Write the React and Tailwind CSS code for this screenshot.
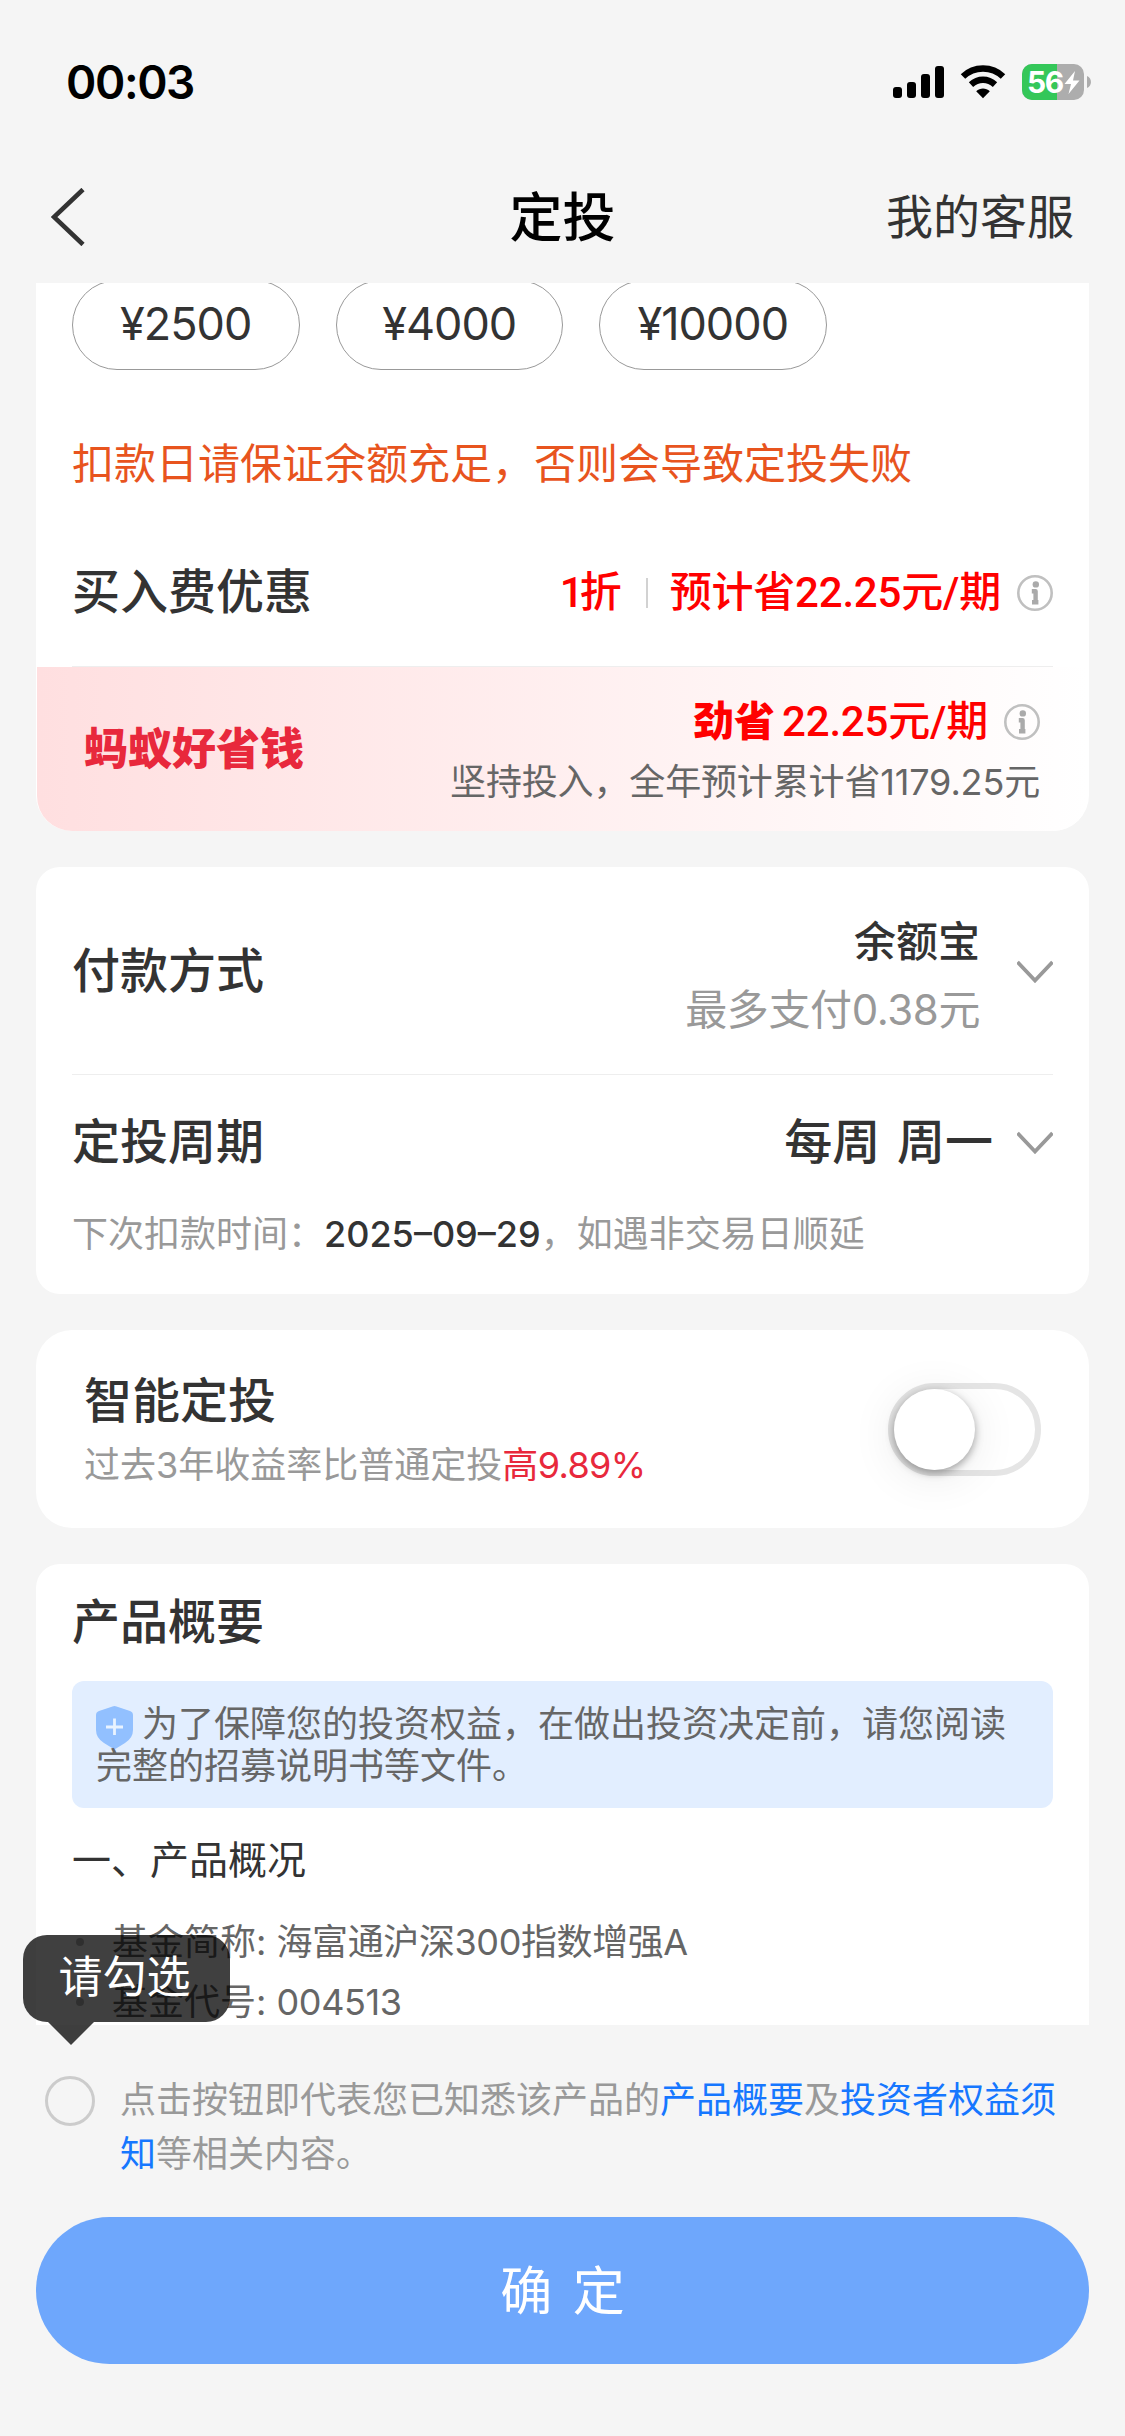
const amounts = ["¥2500", "¥4000", "¥10000"]

const fundInfo = [
  { label: "基金简称", value: "海富通沪深300指数增强A" },
  { label: "基金代号", value: "004513" },
]

function InfoIcon() {
  return (
    <svg className="h-9 w-9 shrink-0" viewBox="0 0 36 36" fill="none">
      <circle cx="18" cy="18" r="16.7" stroke="#c0c0c0" strokeWidth="2.6" />
      <circle cx="18.8" cy="9.4" r="3.2" fill="#aaa" />
      <path d="M14.8 16.2h3.8v11M15 27.300h6.4" stroke="#aaa" strokeWidth="4.4" strokeLinejoin="round" />
    </svg>
  )
}

function ChevronDown() {
  return (
    <svg className="mt-0.5 h-6 w-9 shrink-0" viewBox="0 0 36 24" fill="none">
      <path d="M0.5 2L18 20.5L35.5 2" stroke="#999" strokeWidth="3.8" />
    </svg>
  )
}

function StatusBar() {
  return (
    <div className="flex h-[132px] items-center justify-between pt-8 pl-[66px] pr-[34px]">
      <span className="text-[46px] leading-[50px] font-semibold tracking-[-1.4px] text-black">00:03</span>
      <div className="flex items-center">
        <svg className="h-8 w-[51px]" viewBox="0 0 51 32">
          <rect x="0" y="21" width="9" height="11" rx="3" />
          <rect x="14" y="16" width="9" height="16" rx="3" />
          <rect x="28" y="8" width="9" height="24" rx="3" />
          <rect x="42" y="0" width="9" height="32" rx="3" />
        </svg>
        <svg className="ml-4 h-[34px] w-[46px]" viewBox="0 0 46 34" fill="none">
          <path d="M3 11.5C14 0.8 32 0.8 43 11.5" stroke="#000" strokeWidth="6.4" />
          <path d="M11 19.6C18 13.2 28 13.2 35 19.6" stroke="#000" strokeWidth="6.4" />
          <path d="M16.2 26.2C20.2 22.6 25.8 22.6 29.8 26.2L23 33.2z" fill="#000" />
        </svg>
        <div className="relative ml-4 flex h-9 w-[62px] items-center overflow-hidden rounded-[10px] bg-[#adadad] pl-[5px]">
          <div className="absolute inset-y-0 left-0 w-[35px] bg-[#34c759]" />
          <span className="relative text-[30px] leading-9 font-bold tracking-[-1.5px] text-white">56</span>
          <svg className="relative ml-px h-[23px] w-4" viewBox="0 0 16 23" fill="#fff">
            <path d="M11 0L0.5 13H7L4.5 23L15.5 9.5H9z" />
          </svg>
        </div>
        <svg className="ml-[3px] h-3 w-1" viewBox="0 0 4 12" fill="#adadad">
          <path d="M0 0C5.3 2 5.3 10 0 12z" />
        </svg>
      </div>
    </div>
  )
}

function NavBar() {
  return (
    <div className="grid h-[151px] grid-cols-3 items-center px-[51px] pt-[18px]">
      <svg className="h-[58px] w-[34px]" viewBox="0 0 34 58" fill="none">
        <path d="M32 1.500L3 29L32 56.500" stroke="#333" strokeWidth="4.6" />
      </svg>
      <h1 className="pt-0.5 text-center text-[53px] leading-[60px] font-medium text-black">定投</h1>
      <span className="text-right text-[47px] leading-[60px] text-[#333]">我的客服</span>
    </div>
  )
}

function AmountCard() {
  return (
    <section className="shrink-0 rounded-b-[36px] bg-white">
      <div className="-mt-[3px] flex gap-9 px-9">
        {amounts.map((amount) => (
          <button
            key={amount}
            className="h-[90px] w-[227.5px] rounded-full border border-[#999] pb-[3px] text-[45px] leading-[60px] tracking-[-1px] text-[#333]"
          >
            {amount}
          </button>
        ))}
      </div>
      <p className="mt-[64px] px-9 text-[42px] leading-[60px] text-[#e8541e]">扣款日请保证余额充足，否则会导致定投失败</p>
      <div className="mx-9 mt-[22px] flex h-[151px] items-center justify-between border-b border-[#eee]">
        <span className="pt-0.5 text-5xl font-medium text-[#333]">买入费优惠</span>
        <div className="flex items-center pt-1 font-[Roboto,'Noto_Sans_CJK_SC',sans-serif] text-[42px] leading-[60px] font-medium text-[#f00]">
          <span>
            <span className="tracking-[-4px]">1</span>折
          </span>
          <span className="mr-[22px] ml-6 h-[30px] w-0.5 bg-[#d2d2d2]" />
          <span className="tracking-[-0.2px]">预计省22.25元/期</span>
          <span className="ml-4">
            <InfoIcon />
          </span>
        </div>
      </div>
      <div className="mx-px flex h-[164px] items-center justify-between rounded-b-[35px] bg-linear-to-r from-[#ffdfe0] to-white pr-12 pl-[47px]">
        <span className="text-[44px] font-black text-[#e8283c]">蚂蚁好省钱</span>
        <div className="flex flex-col items-end pt-1.5">
          <div className="flex items-center font-[Roboto,'Noto_Sans_CJK_SC',sans-serif] text-[42px] leading-[60px] font-medium text-[#f00]">
            <span className="mr-[7px] text-[41px] font-black">劲省</span>
            <span className="tracking-[-0.2px]">22.25元/期</span>
            <span className="ml-4">
              <InfoIcon />
            </span>
          </div>
          <p className="text-4xl leading-[60px] tracking-[-0.15px] text-[#666]">坚持投入，全年预计累计省1179.25元</p>
        </div>
      </div>
    </section>
  )
}

function PaymentCard() {
  return (
    <section className="h-[427px] shrink-0 rounded-3xl bg-white px-9">
      <div className="flex h-[208px] items-center justify-between border-b border-[#eee]">
        <span className="text-5xl font-medium text-[#333]">付款方式</span>
        <div className="flex items-center gap-[37px]">
          <div className="flex flex-col items-end pt-2.5 text-[42px] leading-[68px]">
            <span className="font-medium text-[#333]">余额宝</span>
            <span className="tracking-[-0.4px] text-[#999]">最多支付0.38元</span>
          </div>
          <ChevronDown />
        </div>
      </div>
      <div className="flex h-[134px] items-center justify-between">
        <span className="text-5xl font-medium text-[#333]">定投周期</span>
        <div className="flex items-center gap-6">
          <span className="text-5xl font-medium [word-spacing:4px] text-[#333]">每周 周一</span>
          <ChevronDown />
        </div>
      </div>
      <p className="text-4xl leading-[50px] text-[#999]">
        下次扣款时间：<span className="font-medium text-[#333]">2025–09–29</span>，如遇非交易日顺延
      </p>
    </section>
  )
}

function SmartCard() {
  return (
    <section className="flex h-[198px] shrink-0 items-center justify-between rounded-[36px] bg-white px-12">
      <div className="pt-0.5">
        <h2 className="text-5xl leading-[70px] font-medium text-[#333]">智能定投</h2>
        <p className="text-4xl leading-[58px] text-[#999]">
          过去3年收益率比普通定投<span className="tracking-[-0.6px] text-[#e8283c]">高9.89%</span>
        </p>
      </div>
      <button className="h-[93px] w-[153px] rounded-full border-6 border-[#e5e5e5] bg-white">
        <span className="block h-[81px] w-[81px] rounded-full bg-white shadow-[0_3px_9px_rgba(0,0,0,0.35),0_6px_48px_rgba(0,0,0,0.09)]" />
      </button>
    </section>
  )
}

function SummaryCard() {
  return (
    <section className="shrink-0 rounded-t-3xl bg-white px-9 pt-6">
      <h2 className="text-5xl leading-[68px] font-medium text-[#333]">产品概要</h2>
      <div className="mt-[25px] h-[127px] rounded-xl bg-[#e2eeff] px-6 pt-[22px] text-4xl leading-[42px] text-[#666]">
        <svg className="-my-3 mr-[9px] inline-block h-[43px] w-[37px] align-middle" viewBox="0 0 37 43">
          <path
            d="M16.500 0.500Q18.500 -0.300 20.500 0.500L34 5Q37 6 37 9V24Q37 32 29 37L20.500 42.300Q18.500 43.500 16.500 42.300L8 37Q0 32 0 24V9Q0 6 3 5z"
            fill="#92c0ff"
          />
          <path d="M18.500 12.500v16.500M10 21h17" stroke="#e9f3ff" strokeWidth="2.8" />
        </svg>
        为了保障您的投资权益，在做出投资决定前，请您阅读完整的招募说明书等文件。
      </div>
      <h3 className="mt-[22px] text-[39px] leading-[60px] text-[#333]">一、产品概况</h3>
      <ul className="mt-[22px] text-4xl leading-[60px] text-[#666]">
        {fundInfo.map((item) => (
          <li key={item.label} className="flex items-center">
            <span className="mr-7 ml-1 h-2 w-2 rounded-full bg-[#bbb]" />
            <span>
              {item.label}: <span className="tracking-[-0.4px]">{item.value}</span>
            </span>
          </li>
        ))}
      </ul>
    </section>
  )
}

function Tooltip() {
  return (
    <div className="absolute -top-[90px] left-[23px]">
      <div className="h-[87px] w-[207px] rounded-3xl bg-black/75 pr-1 text-center text-[44px] leading-[84px] text-white">
        请勾选
      </div>
      <svg className="ml-[25px] h-[23px] w-[46px]" viewBox="0 0 46 23">
        <path d="M0 0H46L23 23z" fillOpacity="0.75" />
      </svg>
    </div>
  )
}

function Footer() {
  return (
    <footer className="relative px-9 pt-[48px]">
      <Tooltip />
      <div className="flex items-start pl-[9px]">
        <span className="mt-[3px] h-[50px] w-[50px] shrink-0 rounded-full border-3 border-[#ccc]" />
        <p className="ml-[25px] flex-1 text-4xl leading-[54px] text-[#999]">
          点击按钮即代表您已知悉该产品的<span className="text-[#1677ff]">产品概要</span>及
          <span className="text-[#1677ff]">投资者权益须知</span>等相关内容。
        </p>
      </div>
      <button className="mt-9 flex h-[147px] w-full items-center justify-center rounded-full bg-[#6ea7fc] pt-0.5 text-[52px] [word-spacing:6px] text-white">
        确 定
      </button>
    </footer>
  )
}

export default function App() {
  return (
    <div
      lang="zh-CN"
      className="h-[2436px] w-[1125px] overflow-hidden bg-[#f5f5f5] font-[Inter,'Noto_Sans_CJK_SC',sans-serif]"
    >
      <StatusBar />
      <NavBar />
      <main className="flex h-[1742px] flex-col gap-9 overflow-hidden px-9">
        <AmountCard />
        <PaymentCard />
        <SmartCard />
        <SummaryCard />
      </main>
      <Footer />
    </div>
  )
}
